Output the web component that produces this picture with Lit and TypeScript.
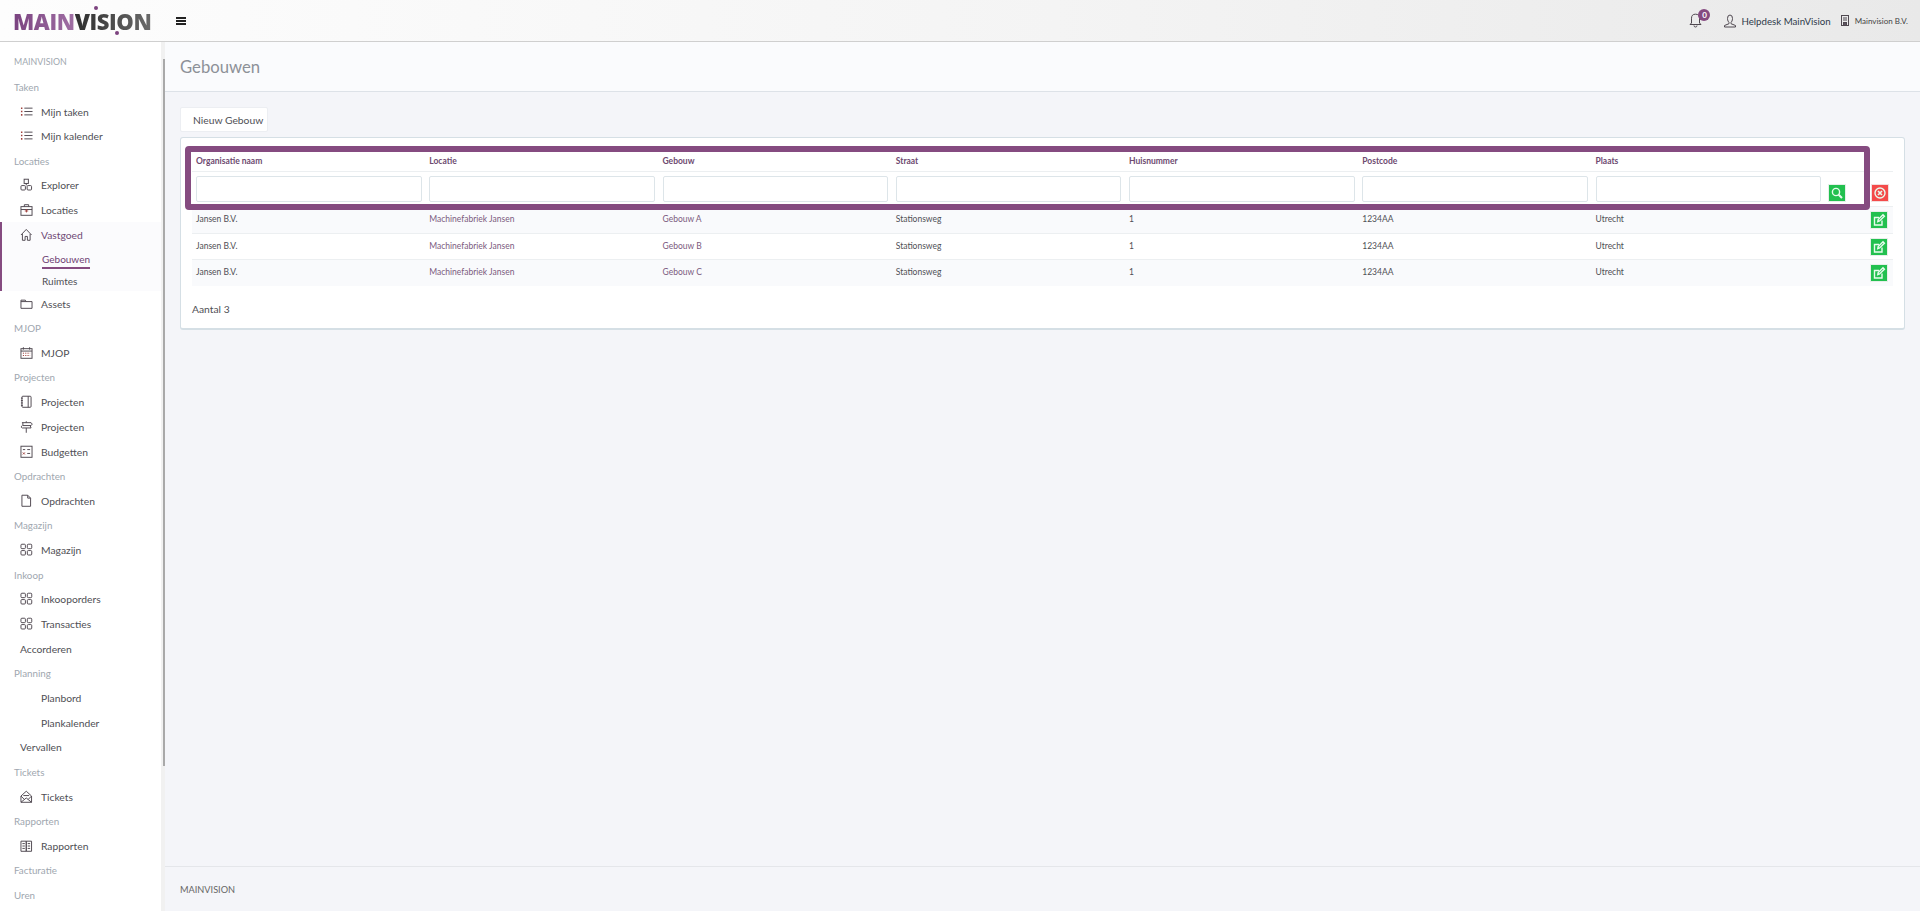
import { LitElement, html, css, svg } from "lit";
import { customElement } from "lit/decorators.js";

const icons: Record<string, any> = {
  list: svg`<path d="M1 3h1.500M1 6.500h1.500M1 10h1.500" stroke="#a0413c" stroke-width="1.600"/><path d="M4.500 3H13M4.500 6.500H13M4.500 10H13"/>`,
  explorer: svg`<rect x="4.300" y="1" width="4.400" height="4.400"/><rect x="1" y="7.600" width="4.600" height="4.600" rx="1"/><rect x="7.400" y="7.600" width="4.600" height="4.600" rx="1"/><path d="M6.500 5.400v2"/>`,
  case: svg`<rect x="1" y="3.500" width="11.500" height="9"/><path d="M4.500 3.500V1.500h4.500v2M1 6.500h11.500" /><path d="M6.700 6v3.500M5 8h3.500" stroke="#a0413c"/>`,
  home: svg`<path d="M1 7 6.500 1.200 12 7M2.500 6v6.500h2.800V8.500h2.400v4h2.800V6"/>`,
  folder: svg`<path d="M1 3V11.500H12.500V4.500H1M1 3H5.500L6.500 4.500"/>`,
  cal: svg`<rect x="1" y="2.500" width="11.500" height="10"/><path d="M3.500 1v2.500M10 1v2.500M1 5h11.500"/><path d="M3 7.200h7.500M3 9.600h7.500" stroke="#a0413c" stroke-dasharray="1.200 1.200"/>`,
  book: svg`<rect x="2" y="1" width="9.500" height="11.500" rx="1"/><path d="M8.500 1v11.500M1 3h2M1 5.500h2M1 8h2M1 10.500h2"/>`,
  sign: svg`<path d="M2 2.500h9.500l1.200 1.500-1.200 1.500H3V2.500M10.500 5.500 11.500 8H2.500L1 6.800 2.500 5.500M6.500 8v5M6.500 1v1.500"/>`,
  budget: svg`<rect x="1" y="1" width="11.500" height="11.500"/><path d="M3 4.500h2.400M7.500 4.500h3M7.500 8.500h3"/><path d="M3 7.500l2 2M5 7.500l-2 2" stroke="#a0413c"/>`,
  file: svg`<path d="M2 1h6l3 3v8.500H2zM8 1v3h3"/>`,
  grid: svg`<rect x="1" y="1" width="4.600" height="4.600" rx="1"/><rect x="7.600" y="1" width="4.600" height="4.600" rx="1"/><rect x="1" y="7.600" width="4.600" height="4.600" rx="1"/><rect x="7.600" y="7.600" width="4.600" height="4.600" rx="1"/>`,
  mail: svg`<path d="M1 6 6.500 1 12 6v6.500H1zM1 12.500 6.500 8l5.500 4.500M1 6l3.500 3.500M12 6 8.500 9.500M3.500 5.500h6"/>`,
  reports: svg`<path d="M1 2h5.500v10.500H1zM6.500 2H12v10.500H6.500zM2.500 4.500h2.500M2.500 7h2.500M2.500 9.500h2.500M8 4.500h2.500M8 7h2.500M8 9.500h2.500"/>`,
};

type Nav = { t: "l" | "i"; label: string; icon?: string; cls?: string };
const L = (label: string, cls = ""): Nav => ({ t: "l", label, cls });
const I = (label: string, icon?: string): Nav => ({ t: "i", label, icon });

const navBefore: Nav[] = [
  L("MAINVISION", "upper"), L("Taken"), I("Mijn taken", "list"), I("Mijn kalender", "list"),
  L("Locaties"), I("Explorer", "explorer"), I("Locaties", "case"),
];
const navAfter: Nav[] = [
  I("Assets", "folder"), L("MJOP"), I("MJOP", "cal"), L("Projecten"),
  I("Projecten", "book"), I("Projecten", "sign"), I("Budgetten", "budget"),
  L("Opdrachten"), I("Opdrachten", "file"), L("Magazijn"), I("Magazijn", "grid"),
  L("Inkoop"), I("Inkooporders", "grid"), I("Transacties", "grid"),
  { t: "i", label: "Accorderen", cls: "flush" }, L("Planning"), I("Planbord", "none"), I("Plankalender", "none"),
  { t: "i", label: "Vervallen", cls: "flush" }, L("Tickets"), I("Tickets", "mail"),
  L("Rapporten"), I("Rapporten", "reports"), L("Facturatie"), L("Uren"),
];
const heads = ["Organisatie naam", "Locatie", "Gebouw", "Straat", "Huisnummer", "Postcode", "Plaats"];
const rows = ["Gebouw A", "Gebouw B", "Gebouw C"];

@customElement("app-root")
export class AppRoot extends LitElement {
  static styles = css`
    :host { display: block; height: 911px; overflow: hidden; font-family: "Lato", "Open Sans", sans-serif; color: #555; background: #f4f5f9; }
    .top { height: 41px; display: flex; align-items: center; background: linear-gradient(to right, #fdfdfd, #f4f4f4 55%, #e9e9e9); border-bottom: 1px solid #cfcfcf; box-sizing: content-box; }
    .logo { margin-left: 13px; width: 163px; font: 800 22px/1 "Open Sans", sans-serif; letter-spacing: -0.4px; display: flex; }
    .m { background: linear-gradient(to right, #7a4380, #a06fa4); -webkit-background-clip: text; background-clip: text; color: transparent; }
    .v { background: linear-gradient(to right, #2e2e2e, #6a6a6a); -webkit-background-clip: text; background-clip: text; color: transparent; position: relative; }
    .dot { position: absolute; width: 4px; height: 4px; border-radius: 50%; background: #7c437f; }
    .d1 { left: 19px; top: -4px; }
    .d2 { left: 40px; top: 21px; }
    .burger { width: 10px; height: 8px; border-top: 2px solid #222; border-bottom: 2px solid #222; position: relative; box-sizing: border-box; }
    .burger::after { content: ""; position: absolute; left: 0; right: 0; top: 1px; height: 2px; background: #222; }
    .right { margin-left: auto; display: flex; align-items: center; padding-right: 12px; }
    .bell { position: relative; width: 14px; height: 18px; margin-right: 20px; margin-top: 1px; }
    .badge { position: absolute; left: 9px; top: -3px; width: 12px; height: 12px; border-radius: 50%; background: #854b80; color: #fff; font: 700 8px/12px "Lato", sans-serif; text-align: center; }
    .help { font-size: 9.7px; color: #2f3a4a; margin-left: 4px; margin-right: 10px; }
    .org { font-size: 8px; color: #444; margin-left: 6px; }
    .ic { fill: none; stroke: #4f4850; stroke-width: 1; }

    .body { display: flex; height: 869px; }
    .side { width: 161px; background: #fff; padding-top: 8px; overflow: hidden; flex: none; }
    .track { width: 4px; background: #f1f1f1; flex: none; display: flex; justify-content: flex-end; }
    .thumb { width: 2px; height: 707px; margin-top: 17px; background: #a9a9a9; }
    .lab { height: 24.6px; line-height: 24.6px; padding-left: 14px; color: #a0a7af; font-size: 9.8px; }
    .lab.upper { font-size: 8.8px; }
    .item { height: 24.68px; display: flex; align-items: center; color: #4f4f55; font-size: 10.3px; padding-left: 20px; }
    .item svg { width: 13px; height: 14px; margin-right: 8px; flex: none; }
    .blank { width: 13px; margin-right: 8px; flex: none; }
    .active { background: #fbfbfd; border-left: 2px solid #854b80; height: 69px; }
    .active .item { padding-left: 18px; color: #6f4a75; }
    .sub { padding-left: 40px; font-size: 10px; }
    .sub span { display: inline-block; }
    .s1 { height: 22px; padding-top: 2px; line-height: 21px; color: #6f3f73; }
    .s1 span { border-bottom: 2px solid #854b80; line-height: 13px; height: 14px; }
    .s2 { height: 21px; line-height: 21px; color: #4f4f55; }

    .main { flex: 1; display: flex; flex-direction: column; min-width: 0; }
    .title { height: 49px; background: #fafbfd; border-bottom: 1px solid #dde2e8; padding-left: 15px; display: flex; align-items: center; font-size: 16.7px; color: #8d9198; flex: none; }
    .content { flex: 1; padding: 15px 15px 0 15px; }
    .btn { display: flex; align-items: center; width: 88px; height: 25px; box-sizing: border-box; background: #fff; border: 1px solid #eceef2; border-radius: 2px; padding-left: 12px; font-size: 10.3px; color: #4f4f55; margin-bottom: 5px; white-space: nowrap; }
    .card { position: relative; width: 1725px; height: 193px; box-sizing: border-box; background: #fff; border: 1px solid #d5dfe5; border-bottom-width: 2px; border-radius: 3px; padding: 8px 11px 0; }
    .frame { position: absolute; left: 4px; top: 8px; width: 1685px; height: 64px; box-sizing: border-box; border: 6px solid #854b80; border-radius: 4px; }
    .row { display: grid; grid-template-columns: repeat(7, 233.25px) 44px 1fr; width: 1701px; font-size: 8.5px; }
    .row > div { padding-left: 4px; }
    .hd { height: 25px; border-bottom: 1px solid #eceff1; line-height: 31px; color: #6d4a70; font-weight: 700; }
    .flt { height: 34px; border-bottom: 1px solid #eceff1; }
    .flt input { display: block; width: 225.5px; height: 26px; margin-top: 4px; box-sizing: border-box; border: 1px solid #dde5e9; border-radius: 2px; background: #fff; padding: 0; }
    .flt > div:nth-child(8) { padding-left: 3px; padding-top: 12px; }
    .flt > div:nth-child(9) { padding-left: 2px; padding-top: 12px; }
    .dt { height: 25px; border-bottom: 1px solid #eceff1; line-height: 24px; color: #4f4f55; }
    .dt.odd { background: #f9fafc; height: 26px; }
    .dt.last { border-bottom: none; }
    .dt .pur { color: #7b5a7e; }
    .ib { display: flex; align-items: center; justify-content: center; width: 18px; height: 18px; box-sizing: border-box; border: 1px solid #e6efe9; background: #22c04f; }
    .ib.red { background: #f44a4a; border-color: #f2dede; }
    .ib svg { width: 14px; height: 14px; fill: none; stroke: #e8fbee; stroke-width: 1.4; }
    .dt .ib { margin-top: 4px; margin-left: 1px; }
    .dt > div:last-child { padding-left: 0; }
    .total { margin-top: 16px; font-size: 10.3px; color: #4f4f55; line-height: 14px; }
    .foot { height: 44px; border-top: 1px solid #e4e6ea; padding-left: 15px; display: flex; align-items: center; font-size: 9.2px; color: #666; flex: none; }
  `;

  private navRow(n: Nav) {
    if (n.t === "l") return html`<div class="lab ${n.cls ?? ""}">${n.label}</div>`;
    return html`<div class="item ${n.cls ?? ""}">
      ${n.icon === "none" ? html`<span class="blank"></span>` : n.icon ? html`<svg class="ic" viewBox="0 0 13.5 14">${icons[n.icon]}</svg>` : ""}
      ${n.label}</div>`;
  }

  private edit() {
    return html`<span class="ib"><svg viewBox="0 0 14 14"><path d="M10 7.500V12H2.500V4.500H7"/><path d="M5.800 8.600 6.200 6.600 11 1.800l1.400 1.400-4.800 4.800z"/></svg></span>`;
  }

  render() {
    return html`
      <div class="top">
        <div class="logo"><span class="m">MAIN</span><span class="v">VISION<i class="dot d1"></i><i class="dot d2"></i></span></div>
        <div class="burger"></div>
        <div class="right">
          <div class="bell">
            <svg class="ic" width="13" height="16" viewBox="0 0 13 16"><path d="M2.500 11V6.200a4 4 0 0 1 8 0V11l1.500 1.500H1zM5 13.500a1.500 1.500 0 0 0 3 0"/></svg>
            <span class="badge">0</span>
          </div>
          <svg class="ic" width="14" height="14" viewBox="0 0 14 14"><path d="M4.500 4.500a2.500 3.500 0 0 1 5 0c0 2-1 3.500-1.500 4v1.200l4.500 1.800v1.500h-11v-1.500L6 9.700V8.500c-.5-.5-1.500-2-1.500-4z"/></svg>
          <span class="help">Helpdesk MainVision</span>
          <svg class="ic" width="8" height="11" viewBox="0 0 8 11"><rect x=".5" y=".5" width="7" height="10"/><path d="M2 3h4M2 5h4"/><rect x="2.500" y="7.500" width="3" height="3" fill="#5d5560"/></svg>
          <span class="org">Mainvision B.V.</span>
        </div>
      </div>
      <div class="body">
        <nav class="side">
          ${navBefore.map((n) => this.navRow(n))}
          <div class="active">
            <div class="item"><svg class="ic" viewBox="0 0 13.5 14">${icons.home}</svg>Vastgoed</div>
            <div class="sub s1"><span>Gebouwen</span></div>
            <div class="sub s2"><span>Ruimtes</span></div>
          </div>
          ${navAfter.map((n) => this.navRow(n))}
        </nav>
        <div class="track"><div class="thumb"></div></div>
        <div class="main">
          <div class="title">Gebouwen</div>
          <div class="content">
            <div class="btn">Nieuw Gebouw</div>
            <div class="card">
              <div class="row hd">${heads.map((h) => html`<div>${h}</div>`)}<div></div><div></div></div>
              <div class="row flt">
                ${heads.map(() => html`<div><input type="text" /></div>`)}
                <div><span class="ib"><svg viewBox="0 0 14 14"><circle cx="6" cy="6" r="3.600"/><path d="M8.700 8.700 12 12" stroke-width="2"/></svg></span></div>
                <div><span class="ib red"><svg viewBox="0 0 14 14"><circle cx="7" cy="7" r="5"/><path d="M5 5l4 4M9 5l-4 4" stroke-width="1.600"/></svg></span></div>
              </div>
              ${rows.map((g, i) => html`
                <div class="row dt ${i % 2 === 0 ? "odd" : ""} ${i === 2 ? "last" : ""}">
                  <div>Jansen B.V.</div><div class="pur">Machinefabriek Jansen</div><div class="pur">${g}</div>
                  <div>Stationsweg</div><div>1</div><div>1234AA</div><div>Utrecht</div><div></div>
                  <div>${this.edit()}</div>
                </div>`)}
              <div class="total">Aantal 3</div>
              <div class="frame"></div>
            </div>
          </div>
          <div class="foot">MAINVISION</div>
        </div>
      </div>
    `;
  }
}
